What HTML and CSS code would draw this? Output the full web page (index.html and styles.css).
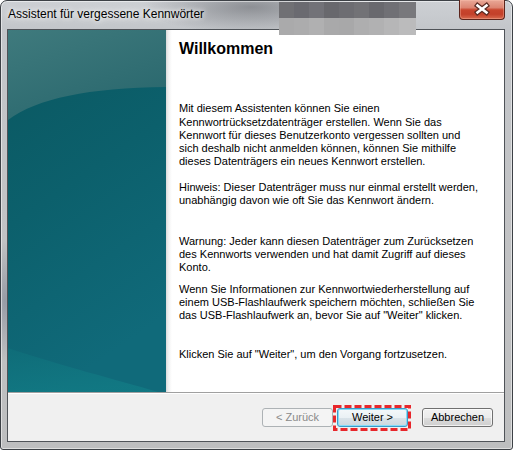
FILE: index.html
```html
<!DOCTYPE html>
<html lang="de">
<head>
<meta charset="utf-8">
<title>Assistent für vergessene Kennwörter</title>
<link rel="stylesheet" href="styles.css">
</head>
<body>
<div class="window">
  <div class="titlebar">
    <div class="title">Assistent für vergessene Kennwörter</div>
    <div class="close">
      <svg width="46" height="20" viewBox="0 0 46 20">
        <g transform="translate(23 10)" stroke-linecap="square">
          <path d="M-4.5 -3.5 L4.5 3.5 M4.5 -3.5 L-4.5 3.5" stroke="#5a2a22" stroke-width="5" fill="none"/>
          <path d="M-4.5 -3.5 L4.5 3.5 M4.5 -3.5 L-4.5 3.5" stroke="#ffffff" stroke-width="2.6" fill="none"/>
        </g>
      </svg>
    </div>
  </div>
  <div class="client">
    <div class="main">
      <div class="side">
        <svg width="158" height="362" viewBox="0 0 158 362">
          <defs>
            <linearGradient id="base" x1="0" y1="0" x2="0.3" y2="1">
              <stop offset="0" stop-color="#0a5760"/>
              <stop offset="0.5" stop-color="#0c606c"/>
              <stop offset="1" stop-color="#106a7a"/>
            </linearGradient>
            <linearGradient id="gloss" x1="0" y1="0" x2="0.6" y2="1">
              <stop offset="0" stop-color="#3f7a7d"/>
              <stop offset="1" stop-color="#2a686e"/>
            </linearGradient>
            <linearGradient id="low" x1="0" y1="0" x2="0.4" y2="1">
              <stop offset="0" stop-color="#0f6f7a"/>
              <stop offset="1" stop-color="#127d86"/>
            </linearGradient>
          </defs>
          <rect width="158" height="362" fill="url(#base)"/>
          <path d="M0 90 C30 68 80 58 158 57 L158 0 L0 0 Z" fill="url(#gloss)"/>
          <path d="M0 318 C50 335 110 350 150 362 L0 362 Z" fill="url(#low)" opacity="0.7"/>
        </svg>
      </div>
      <div class="content">
        <h1 class="heading">Willkommen</h1>
        <p class="p1">Mit diesem Assistenten können Sie einen<br>Kennwortrücksetzdatenträger erstellen. Wenn Sie das<br>Kennwort für dieses Benutzerkonto vergessen sollten und<br>sich deshalb nicht anmelden können, können Sie mithilfe<br>dieses Datenträgers ein neues Kennwort erstellen.</p>
        <p class="p2">Hinweis: Dieser Datenträger muss nur einmal erstellt werden,<br>unabhängig davon wie oft Sie das Kennwort ändern.</p>
        <p class="p3">Warnung: Jeder kann diesen Datenträger zum Zurücksetzen<br>des Kennworts verwenden und hat damit Zugriff auf dieses<br>Konto.</p>
        <p class="p4">Wenn Sie Informationen zur Kennwortwiederherstellung auf<br>einem USB-Flashlaufwerk speichern möchten, schließen Sie<br>das USB-Flashlaufwerk an, bevor Sie auf "Weiter" klicken.</p>
        <p class="p5">Klicken Sie auf "Weiter", um den Vorgang fortzusetzen.</p>
      </div>
    </div>
    <div class="footer">
      <button class="btn btn-disabled" disabled>&lt; Zurück</button>
      <span class="focus-wrap">
        <button class="btn btn-default">Weiter &gt;</button>
        <svg class="mark" width="78" height="26" viewBox="0 0 78 26">
          <rect x="1.5" y="1.5" width="75" height="23" fill="none" stroke="#e8262b" stroke-width="3" stroke-dasharray="7 3"/>
        </svg>
      </span>
      <button class="btn">Abbrechen</button>
    </div>
  </div>
  <div class="mosaic">
    <div class="row dark">
      <i style="background:#707074"></i><i style="background:#6a6a70"></i><i style="background:#727278"></i><i style="background:#68686d"></i><i style="background:#6d6d72"></i><i style="background:#727276"></i><i style="background:#69696e"></i><i style="background:#707075"></i><i style="background:#78787c"></i>
    </div>
    <div class="row light">
      <i style="background:#aaaaab"></i><i style="background:#acacad"></i><i style="background:#b0b0b1"></i><i style="background:#a9a9aa"></i><i style="background:#a8a8a9"></i><i style="background:#aeaeaf"></i><i style="background:#b1b1b2"></i><i style="background:#b6b6b7"></i><i style="background:#bbbbbc"></i>
    </div>
  </div>
</div>
</body>
</html>
```

FILE: styles.css
```css
* { box-sizing: border-box; }

html, body {
  margin: 0;
  padding: 0;
}

body {
  width: 513px;
  height: 450px;
  overflow: hidden;
  background: #ffffff;
  font-family: "Liberation Sans", Arial, sans-serif;
}

.window {
  position: relative;
  width: 513px;
  height: 450px;
  border: 1px solid #3d4146;
  border-radius: 7px 7px 3px 3px;
  padding: 0 7px 7px 6px;
  display: flex;
  flex-direction: column;
  background:
    radial-gradient(ellipse 110px 26px at 250px 6px, rgba(90, 92, 98, 0.55), rgba(90, 92, 98, 0) 100%),
    radial-gradient(ellipse 14px 60px at 4px 300px, rgba(110, 118, 135, 0.5), rgba(110, 118, 135, 0) 100%),
    linear-gradient(180deg, #cdd0d4 0px, #c3c6ca 28px, #c2c3c5 200px, #bdbebf 450px);
  box-shadow: inset 0 0 0 1px rgba(255, 255, 255, 0.5);
}

.titlebar {
  height: 28px;
  flex: none;
  display: flex;
  justify-content: space-between;
  align-items: flex-start;
}

.title {
  padding: 6px 0 0 1px;
  font-size: 12px;
  line-height: 14px;
  color: #000000;
  text-shadow: 0 0 5px #ffffff, 0 0 9px rgba(255, 255, 255, 0.9);
}

.close {
  width: 46px;
  height: 20px;
  margin-top: -1px;
  border: 1px solid #5c241b;
  border-top: none;
  border-radius: 0 0 4px 4px;
  background: linear-gradient(180deg, #e9a897 0%, #dc8572 40%, #c8452d 52%, #c3402a 75%, #d86a4e 100%);
  box-shadow: inset 0 0 0 1px rgba(255, 200, 180, 0.35);
}

.close svg { display: block; margin: -1px 0 0 -1px; }

.client {
  height: 413px;
  flex: none;
  border: 1px solid #4f5358;
  background: #f0f0f0;
  display: flex;
  flex-direction: column;
}

.main {
  height: 362px;
  flex: none;
  display: flex;
}

.side {
  width: 158px;
  flex: none;
}

.side svg { display: block; }

.content {
  flex: 1;
  background: linear-gradient(to right, #d9d9d9 0, #eeeeee 2px, #f8f8f8 4px, #ffffff 6px);
  padding: 10px 0 0 13px;
  white-space: nowrap;
  color: #000000;
}

.heading {
  margin: 0;
  font-size: 16px;
  line-height: 18px;
  font-weight: bold;
}

.content p {
  margin: 0;
  font-size: 11px;
  line-height: 13.2px;
}

.content .p1 { margin-top: 44.3px; }
.content .p2 { margin-top: 12.7px; }
.content .p3 { margin-top: 27.6px; }
.content .p4 { margin-top: 7.9px; }
.content .p5 { margin-top: 25.9px; }

.footer {
  flex: 1;
  border-top: 1px solid #a0a0a0;
  box-shadow: inset 0 1px 0 #ffffff;
  display: flex;
  justify-content: flex-end;
  align-items: flex-start;
  padding: 15px 11px 0 0;
}

.btn {
  width: 71px;
  height: 19px;
  padding: 0;
  margin: 0;
  border: 1px solid #707070;
  border-radius: 3px;
  background: linear-gradient(180deg, #f2f2f2 0%, #ebebeb 50%, #dddddd 51%, #cfcfcf 100%);
  box-shadow: inset 0 0 0 1px rgba(255, 255, 255, 0.7);
  font-family: "Liberation Sans", Arial, sans-serif;
  font-size: 11px;
  line-height: 17px;
  color: #000000;
  text-align: center;
}

.btn-disabled {
  border-color: #adb2b5;
  background: #f4f4f4;
  box-shadow: none;
  color: #8a8a8a;
  margin-right: 4px;
}

.focus-wrap {
  position: relative;
  display: block;
  margin-right: 14px;
}

.btn-default {
  display: block;
  border-color: #3c9ac8;
  box-shadow: inset 0 0 0 1px #86dcf8;
  background: linear-gradient(180deg, #f4f8fa 0%, #eaf1f5 50%, #dae4ea 51%, #ccd7de 100%);
}

.mark {
  position: absolute;
  left: -4px;
  top: -3px;
  display: block;
}

.mosaic {
  position: absolute;
  left: 278px;
  top: 1px;
  width: 137px;
  height: 33px;
  display: flex;
  flex-direction: column;
}

.mosaic .row {
  display: flex;
  height: 16px;
}

.mosaic .light { height: 17px; }

.mosaic i {
  display: block;
  width: 15px;
  height: 100%;
}

.mosaic i:last-child { width: 17px; }
```
